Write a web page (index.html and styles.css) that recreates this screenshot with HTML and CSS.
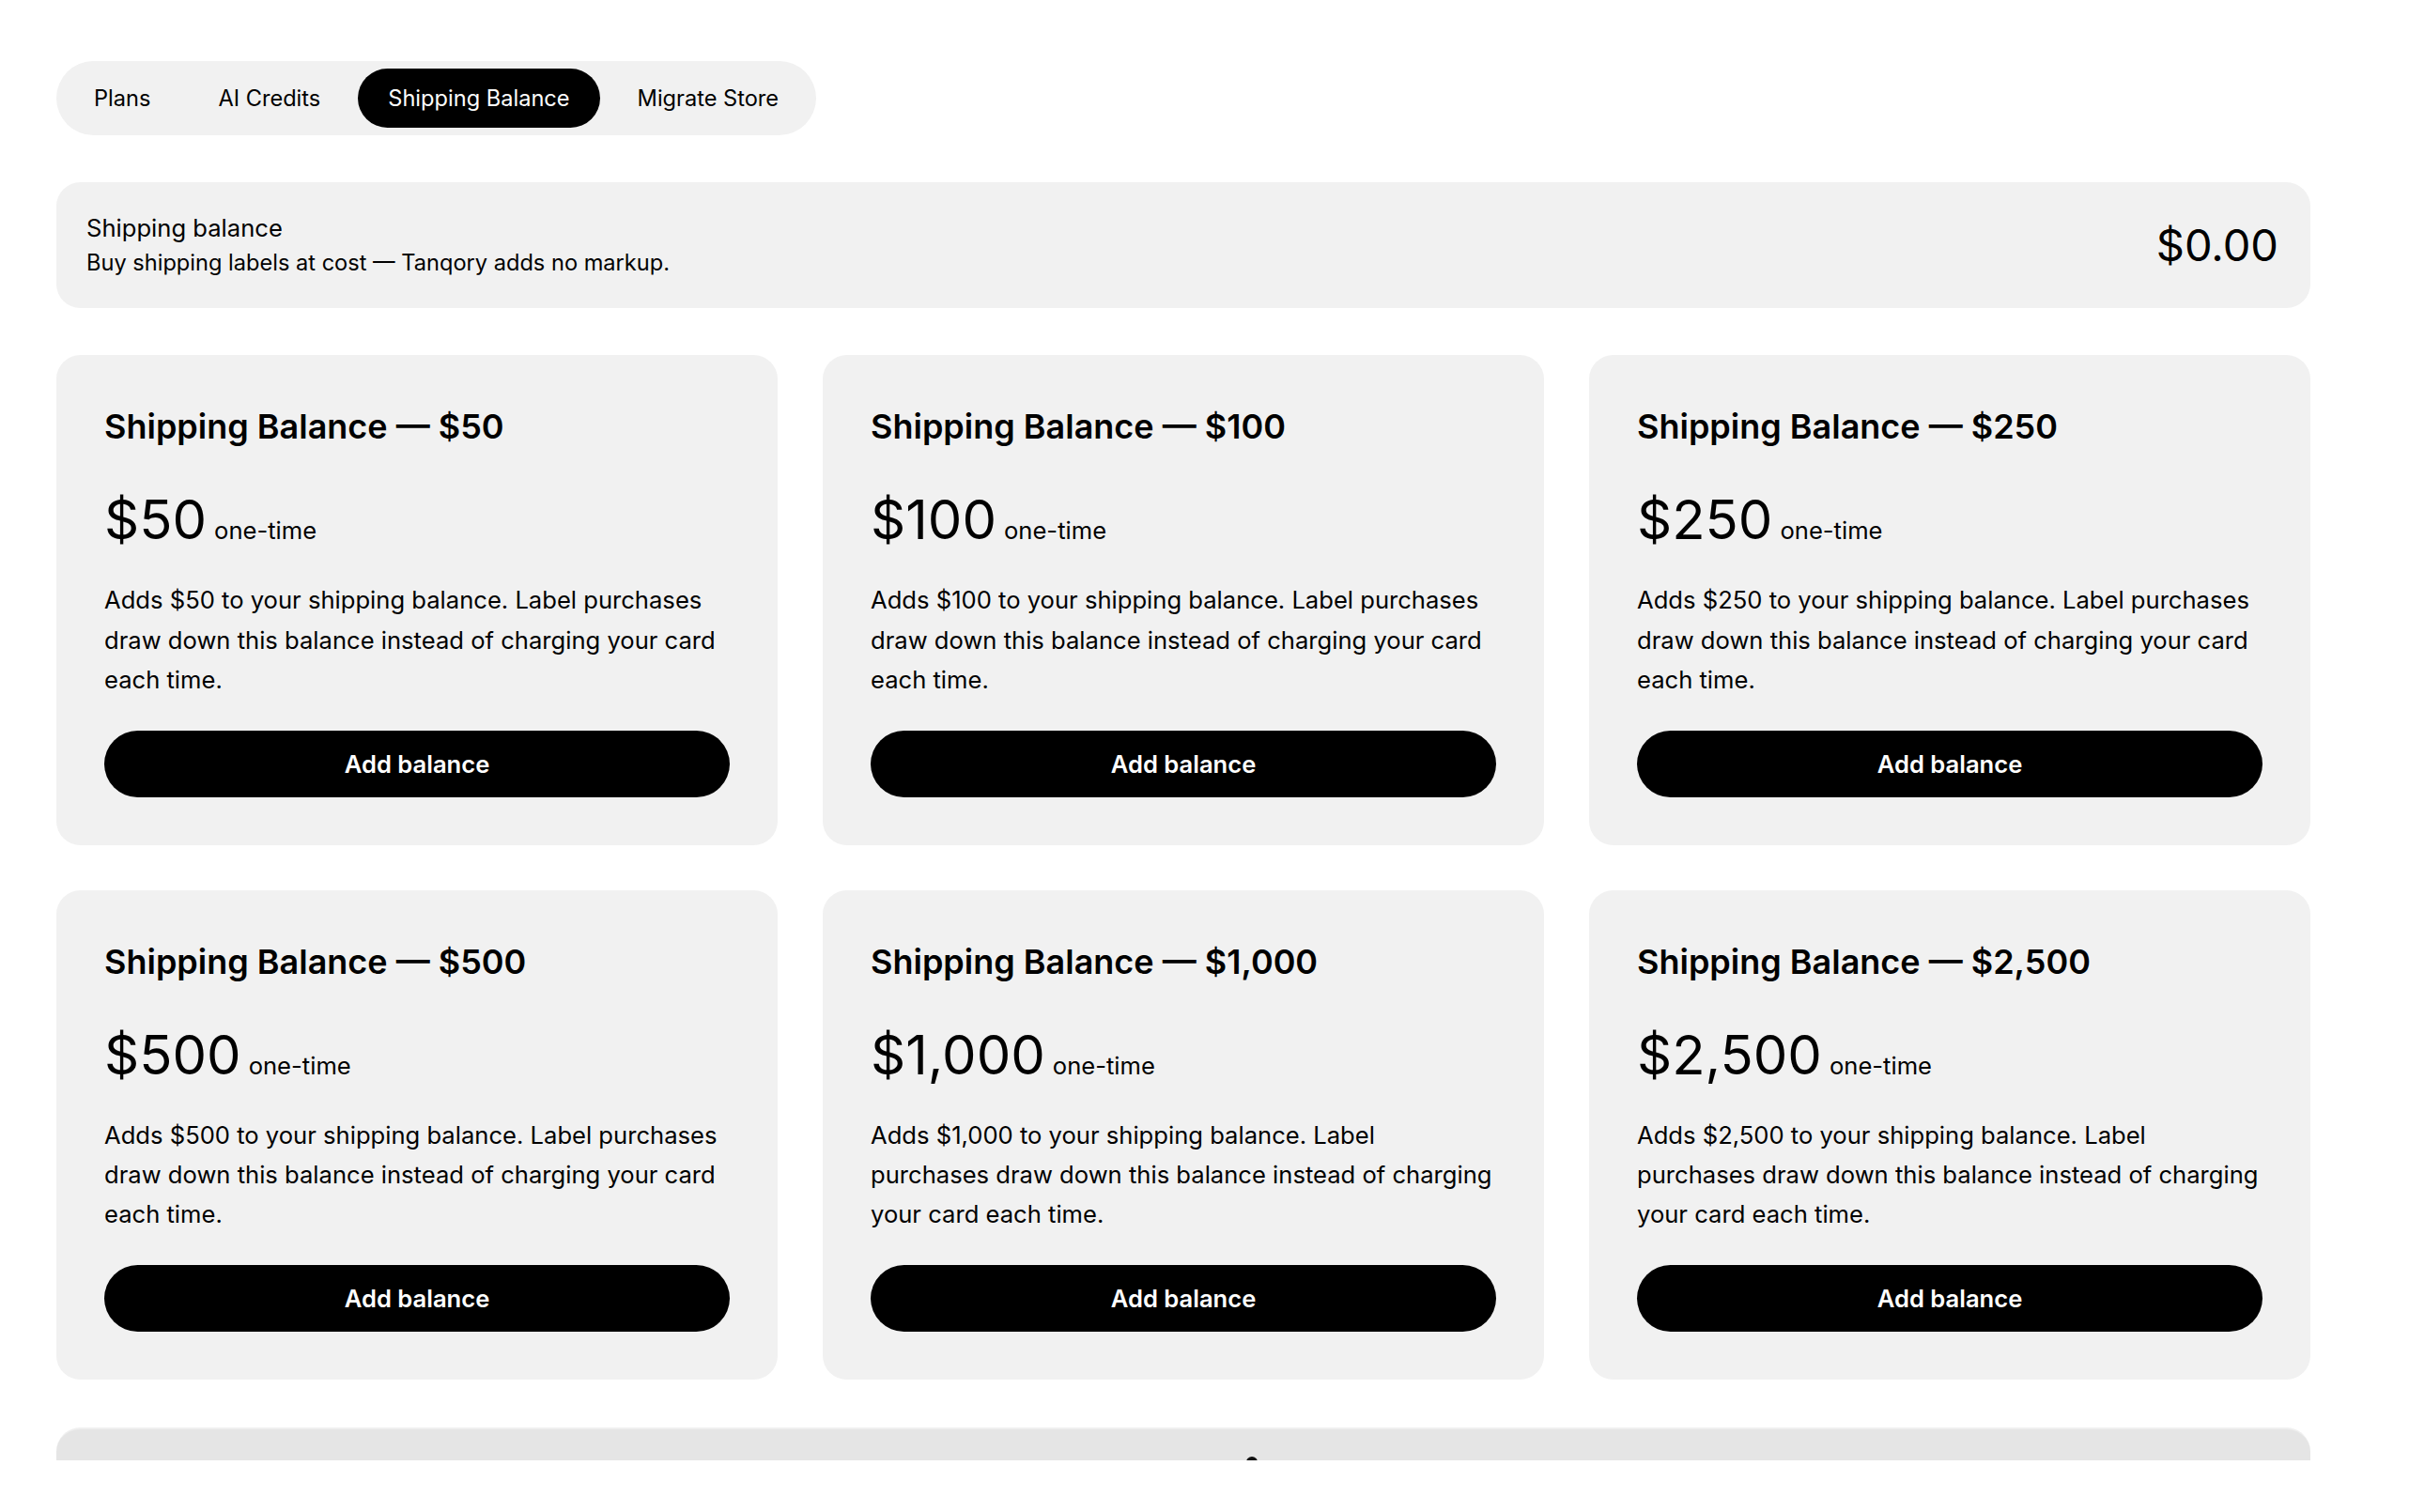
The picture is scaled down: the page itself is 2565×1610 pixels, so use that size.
FILE: index.html
```html
<!DOCTYPE html>
<html lang="en">
<head>
<meta charset="utf-8">
<title>Shipping Balance</title>
<link rel="stylesheet" href="styles.css">
</head>
<body>
<div class="viewport">
  <main class="page">
    <nav class="tabs">
      <button class="tab">Plans</button>
      <button class="tab">AI Credits</button>
      <button class="tab active">Shipping Balance</button>
      <button class="tab">Migrate Store</button>
    </nav>

    <section class="balance">
      <div class="balance-text">
        <div class="balance-title">Shipping balance</div>
        <div class="balance-sub">Buy shipping labels at cost — Tanqory adds no markup.</div>
      </div>
      <div class="balance-amount">$0.00</div>
    </section>

    <section class="grid">
      <article class="card">
        <h3 class="card-title">Shipping Balance — $50</h3>
        <div class="price"><span class="price-num">$50</span><span class="price-unit">one-time</span></div>
        <p class="desc">Adds $50 to your shipping balance. Label purchases draw down this balance instead of charging your card each time.</p>
        <button class="add">Add balance</button>
      </article>
      <article class="card">
        <h3 class="card-title">Shipping Balance — $100</h3>
        <div class="price"><span class="price-num">$100</span><span class="price-unit">one-time</span></div>
        <p class="desc">Adds $100 to your shipping balance. Label purchases draw down this balance instead of charging your card each time.</p>
        <button class="add">Add balance</button>
      </article>
      <article class="card">
        <h3 class="card-title">Shipping Balance — $250</h3>
        <div class="price"><span class="price-num">$250</span><span class="price-unit">one-time</span></div>
        <p class="desc">Adds $250 to your shipping balance. Label purchases draw down this balance instead of charging your card each time.</p>
        <button class="add">Add balance</button>
      </article>
      <article class="card">
        <h3 class="card-title">Shipping Balance — $500</h3>
        <div class="price"><span class="price-num">$500</span><span class="price-unit">one-time</span></div>
        <p class="desc">Adds $500 to your shipping balance. Label purchases draw down this balance instead of charging your card each time.</p>
        <button class="add">Add balance</button>
      </article>
      <article class="card">
        <h3 class="card-title">Shipping Balance — $1,000</h3>
        <div class="price"><span class="price-num">$1,000</span><span class="price-unit">one-time</span></div>
        <p class="desc">Adds $1,000 to your shipping balance. Label purchases draw down this balance instead of charging your card each time.</p>
        <button class="add">Add balance</button>
      </article>
      <article class="card">
        <h3 class="card-title">Shipping Balance — $2,500</h3>
        <div class="price"><span class="price-num">$2,500</span><span class="price-unit">one-time</span></div>
        <p class="desc">Adds $2,500 to your shipping balance. Label purchases draw down this balance instead of charging your card each time.</p>
        <button class="add">Add balance</button>
      </article>
    </section>

    <section class="more">
      <div class="more-mark"></div>
    </section>
  </main>
</div>
</body>
</html>
```
FILE: styles.css
```css
* { box-sizing: border-box; }
html, body { margin: 0; padding: 0; background: #ffffff; }
body {
  font-family: Inter, "Noto Sans", sans-serif;
  color: #000;
}
.viewport {
  height: 1555px;
  overflow: hidden;
}
.page {
  width: 2400px;
  margin-left: 60px;
  padding-top: 65px;
}
.tabs {
  display: inline-flex;
  gap: 8px;
  padding: 8px;
  background: #f1f1f1;
  border-radius: 999px;
}
.tab {
  font-family: inherit;
  font-size: 23.6px;
  line-height: 33px;
  padding: 15px 32px;
  border: 0;
  background: transparent;
  color: #000;
  border-radius: 999px;
}
.tab.active {
  background: #000;
  color: #fff;
}
.balance {
  margin-top: 50px;
  display: flex;
  align-items: center;
  justify-content: space-between;
  background: #f1f1f1;
  border-radius: 25.6px;
  padding: 30px 34px 30px 32px;
}
.balance-title {
  font-size: 25.6px;
  line-height: 38.4px;
}
.balance-sub {
  font-size: 23.6px;
  line-height: 36px;
}
.balance-amount {
  font-size: 47px;
  line-height: 56px;
}
.grid {
  margin-top: 50px;
  display: grid;
  grid-template-columns: repeat(3, 1fr);
  gap: 48px 48px;
}
.card {
  background: #f1f1f1;
  border-radius: 25.6px;
  padding: 51px 51px 51px 51px;
  display: flex;
  flex-direction: column;
}
.card-title {
  margin: 0;
  font-size: 36px;
  font-weight: 600;
  line-height: 51px;
}
.price {
  margin-top: 41px;
  display: flex;
  align-items: baseline;
  gap: 8px;
}
.price-num {
  font-size: 58px;
  line-height: 64px;
  font-weight: 400;
}
.price-unit {
  font-size: 25.6px;
  line-height: 38px;
}
.desc {
  margin: 33px 0 0 0;
  font-size: 25.6px;
  line-height: 42.4px;
}
.add {
  margin-top: 32px;
  height: 71px;
  border: 0;
  border-radius: 999px;
  background: #000;
  color: #fff;
  font-family: inherit;
  font-size: 25.6px;
  font-weight: 600;
}
.more {
  margin-top: 51px;
  height: 120px;
  background: #e5e5e5;
  border-top: 2px solid #efefef;
  border-radius: 25.6px 25.6px 0 0;
  display: flex;
  justify-content: center;
  padding-top: 29px;
}
.more-mark {
  width: 12px;
  height: 12px;
  border-radius: 50%;
  background: #111;
  margin-left: 146px;
}
```
